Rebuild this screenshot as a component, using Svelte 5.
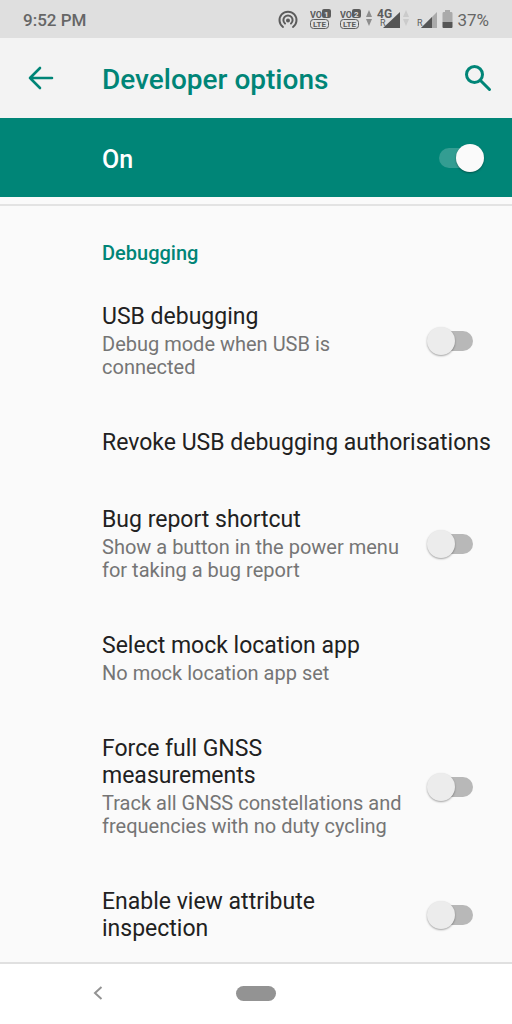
<script lang="ts">
	type Option = {
		id: string;
		title: string;
		summary?: string;
		toggle?: boolean;
	};

	const options: Option[] = [
		{ id: 'usb', title: 'USB debugging', summary: 'Debug mode when USB is connected', toggle: true },
		{ id: 'revoke', title: 'Revoke USB debugging authorisations' },
		{ id: 'bug', title: 'Bug report shortcut', summary: 'Show a button in the power menu for taking a bug report', toggle: true },
		{ id: 'mock', title: 'Select mock location app', summary: 'No mock location app set' },
		{ id: 'gnss', title: 'Force full GNSS measurements', summary: 'Track all GNSS constellations and frequencies with no duty cycling', toggle: true },
		{ id: 'inspect', title: 'Enable view attribute inspection', toggle: true }
	];

	let enabled = $state(true);
	let checked: Record<string, boolean> = $state({ usb: false, bug: false, gnss: false, inspect: false });
</script>

{#snippet text(option: Option)}
	<span class="text">
		<span class="title">{option.title}</span>
		{#if option.summary}
			<span class="summary">{option.summary}</span>
		{/if}
	</span>
{/snippet}

{#snippet volte(sim: string)}
	<svg class="volte" width="21" height="20" viewBox="0 0 21 20" aria-hidden="true">
		<text x="0" y="9" class="tiny">VO</text>
		<rect x="12" y="0" width="9" height="9" rx="2" fill="#5c5c5c" />
		<text x="14" y="8" class="sim">{sim}</text>
		<rect x=".5" y="10.500" width="18" height="9" rx="3" fill="none" stroke="#5c5c5c" />
		<text x="3" y="18" class="lte">LTE</text>
	</svg>
{/snippet}

<div class="screen">
	<div class="status">
		<span class="time">9:52 PM</span>
		<span class="icons">
			<svg width="20" height="20" viewBox="0 0 20 20" fill="none" stroke="#5c5c5c" stroke-width="2" stroke-linecap="round" aria-hidden="true">
				<path d="M5 17A8.500 8.500 0 1 1 15 17" />
				<path d="M7 13.500A4.600 4.600 0 1 1 13 13.500" />
				<circle cx="10" cy="10.500" r="1" fill="#5c5c5c" />
			</svg>
			{@render volte('1')}
			{@render volte('2')}
			<svg class="network" width="48" height="28" viewBox="0 -4 48 28" aria-hidden="true">
				<path d="M1 7L4 0L7 7Z M1 9H7L4 16Z" fill="#8e8e8e" />
				<path d="M18 18L35 2V18Z" fill="#555" />
				<text x="12" y="8" class="gen">4G</text>
				<text x="15" y="16" class="roam">R</text>
				<path d="M38 7L41 0L44 7Z M38 9H44L41 16Z" fill="#cbcbcb" />
			</svg>
			<svg class="signal" width="20" height="20" viewBox="0 0 20 20" aria-hidden="true">
				<path d="M4 18L20 2V18Z" fill="#aaa" />
				<path d="M4 18L15 7V18Z" fill="#555" />
				<text x="0" y="16" class="roam">R</text>
			</svg>
			<svg class="battery" width="11" height="20" viewBox="0 0 11 20" aria-hidden="true">
				<path d="M3 0H8V2H9.500Q10.500 2 10.500 3.500V12H.5V3.500Q.5 2 1.500 2H3Z" fill="#aaa" />
				<path d="M.5 12H10.500V17Q10.500 18 9.500 18H1.500Q.5 18 .5 17Z" fill="#555" />
			</svg>
			<span>37%</span>
		</span>
	</div>

	<header>
		<button class="icon-btn" aria-label="Navigate up">
			<svg width="26" height="24" viewBox="0 0 26 24" fill="none" stroke="#008577" stroke-width="2.600" stroke-linecap="round" stroke-linejoin="round">
				<path d="M24 12H2M12 2L2 12L12 22" />
			</svg>
		</button>
		<h1>Developer options</h1>
		<button class="icon-btn" aria-label="Search">
			<svg width="28" height="28" viewBox="0 0 28 28" fill="none" stroke="#008577" stroke-width="3" stroke-linecap="round">
				<circle cx="10.500" cy="10.500" r="8" />
				<path d="M16.500 16.500L25.500 25.500" />
			</svg>
		</button>
	</header>

	<label class="master">
		<span class="state">On</span>
		<input class="switch" type="checkbox" role="switch" bind:checked={enabled} />
	</label>

	<main>
		<h2>Debugging</h2>
		{#each options as option (option.id)}
			{#if option.toggle}
				<label class="row">
					{@render text(option)}
					<input class="switch" type="checkbox" role="switch" bind:checked={checked[option.id]} />
				</label>
			{:else}
				<button class="row">{@render text(option)}</button>
			{/if}
		{/each}
	</main>

	<nav>
		<button class="back" aria-label="Back">
			<svg width="10" height="14" viewBox="0 0 10 14" fill="none" stroke="#939393" stroke-width="2">
				<path d="M8.500 1L2 7L8.500 13" />
			</svg>
		</button>
		<button class="home" aria-label="Home"></button>
	</nav>
</div>

<style>
	:global(body) { background: #fafafa; }
	.screen {
		display: flex; flex-direction: column; height: 100vh; overflow: hidden;
		background: #fafafa; color: #212121; font-family: Roboto, sans-serif;
	}
	button { background: none; border: 0; padding: 0; margin: 0; font: inherit; color: inherit; text-align: left; cursor: pointer; }
	svg { display: block; }
	h1, h2 { margin: 0; font-weight: 500; color: #008577; }

	.status {
		display: flex; flex: none; align-items: center; justify-content: space-between;
		height: 38px; padding: 2px 23px 0; box-sizing: border-box;
		background: #dfdfdf; color: #666; font-size: 17px;
	}
	.time { font-weight: 500; }
	.icons { display: flex; align-items: center; }
	.volte { margin: 0 0 2px 12px; }
	.volte + .volte { margin-left: 9px; }
	.network { margin-left: 4px; }
	.signal { margin-left: 4px; }
	.battery { margin: 0 4px 0 5px; }
	.icons text { font-weight: 700; fill: #5c5c5c; }
	.tiny { font-size: 9px; }
	.icons .sim { font-size: 8px; fill: #dfdfdf; }
	.lte { font-size: 8px; }
	.gen { font-size: 12px; }
	.icons .roam { font-size: 9px; font-weight: 400; }

	header { display: flex; flex: none; align-items: center; height: 80px; padding: 0 20px 0 28px; background: #f3f3f3; }
	h1 { flex: 1; padding: 3px 0 0 48px; font-size: 28px; line-height: 32px; }
	.icon-btn { flex: none; }

	.master {
		display: flex; flex: none; align-items: center; justify-content: space-between;
		height: 79px; padding: 0 28px 0 102px;
		background: #008577; color: #fff; font-size: 25px; font-weight: 500; cursor: pointer;
	}
	.state { padding-top: 3px; }

	main { flex: 1; min-height: 0; overflow: hidden; margin-top: 7px; border-top: 2px solid #e3e3e3; }
	h2 { padding: 35px 24px 13px 102px; font-size: 20px; line-height: 24px; }
	.row {
		display: flex; align-items: center; justify-content: space-between; box-sizing: border-box;
		width: 100%; padding: 25px 16px 25px 102px; cursor: pointer;
	}
	label.row { padding-right: 39px; }
	.text { display: flex; flex-direction: column; gap: 3px; }
	.title { font-size: 23px; line-height: 27px; }
	.summary { font-size: 20px; line-height: 23px; color: #757575; }

	.switch {
		position: relative; display: flex; align-items: center; flex: none; appearance: none;
		width: 46px; height: 28px; margin: 0 0 0 22px; cursor: pointer;
	}
	.switch::before {
		content: ''; position: absolute; right: 0; top: 4px;
		width: 36px; height: 20px; border-radius: 10px; background: #b8b8b8;
	}
	.switch::after {
		content: ''; position: relative; width: 28px; height: 28px; border-radius: 50%;
		background: #ececec; box-shadow: 0 1px 2px rgba(0, 0, 0, 0.35);
	}
	.switch:checked { justify-content: flex-end; }
	.switch:checked::before { right: 9px; background: #339d92; }
	.switch:checked::after { background: #fafafa; }

	nav {
		display: grid; flex: none; grid-template-columns: 1fr 40px 1fr; align-items: center;
		box-sizing: border-box; height: 62px; padding-bottom: 2px; background: #fff; border-top: 2px solid #e0e0e0;
	}
	.back { justify-self: center; padding: 12px 40px 12px 0; }
	.home { height: 15px; border-radius: 8px; background: #939393; }
</style>
